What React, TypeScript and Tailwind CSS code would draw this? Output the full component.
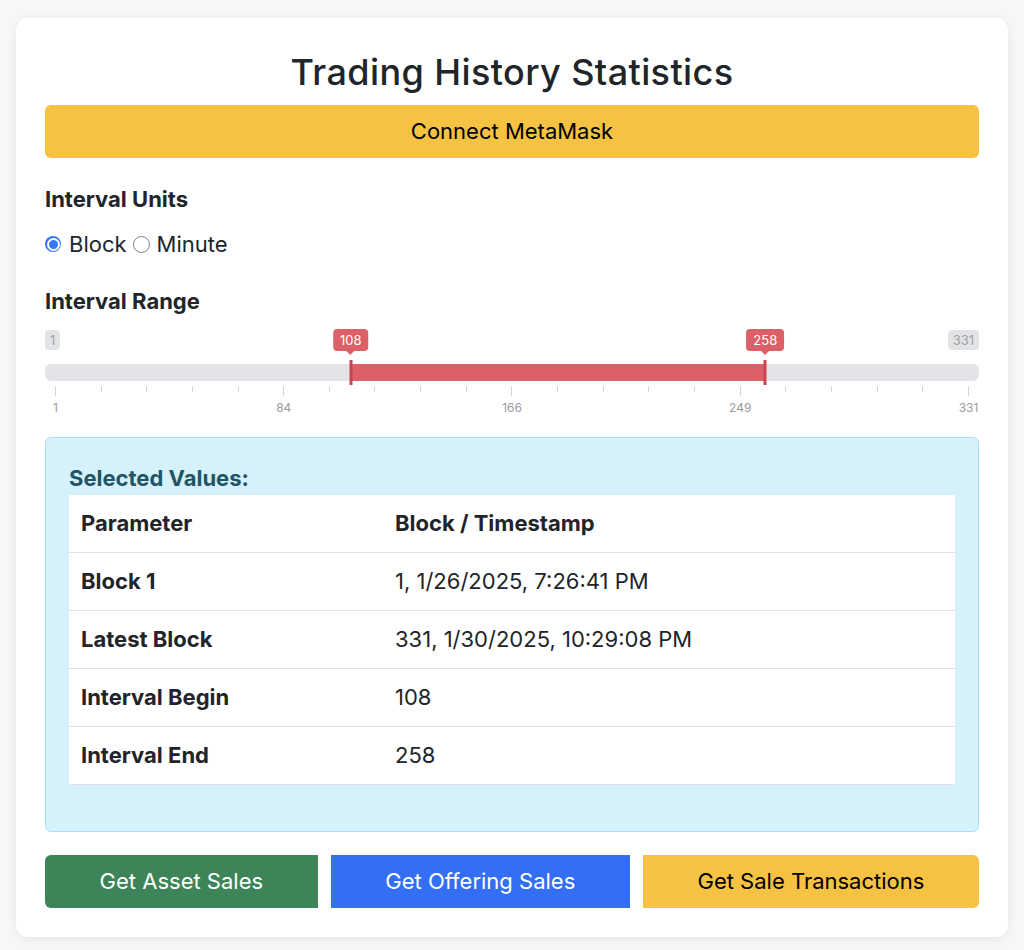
import React from 'react';

const MIN = 1;
const MAX = 331;
const BEGIN = 108;
const END = 258;

// ticks run from 10px to 922px along the 935px track
const toX = (v: number) => 10 + ((v - MIN) / (MAX - MIN)) * 912;

const ticks = Array.from({ length: 21 }, (_, i) => i);
const labels = [1, 84, 166, 249, 331];

const rows = [
  { name: 'Block 1', value: '1, 1/26/2025, 7:26:41 PM' },
  { name: 'Latest Block', value: '331, 1/30/2025, 10:29:08 PM' },
  { name: 'Interval Begin', value: '108' },
  { name: 'Interval End', value: '258' },
];

const Tooltip: React.FC<{ value: number }> = ({ value }) => (
  <div
    className="absolute top-[1px] -translate-x-1/2 flex flex-col items-center"
    style={{ left: toX(value) }}
  >
    <div className="h-[22px] px-[7px] rounded-[4px] bg-[#dc6068] text-white text-[13px] leading-[22px]">
      {value}
    </div>
    <div className="w-0 h-0 border-x-[4px] border-x-transparent border-t-[4px] border-t-[#dc6068]" />
  </div>
);

const Handle: React.FC<{ value: number }> = ({ value }) => (
  <div
    className="absolute -top-[4px] h-[25px] w-[3px] -translate-x-1/2 bg-[#c9444e]"
    style={{ left: toX(value) }}
  />
);

const RangeSlider = () => {
  const left = toX(BEGIN);
  const right = toX(END);
  return (
    <div className="mt-[12px]">
      <div className="relative flex justify-between items-start h-[24px] pt-[2px] text-[13px] leading-[20px] text-[#a0a0a0]">
        <span className="px-[5px] rounded-[4px] bg-[#e3e4e7]">1</span>
        <span className="px-[5px] rounded-[4px] bg-[#e3e4e7]">331</span>
        <Tooltip value={BEGIN} />
        <Tooltip value={END} />
      </div>
      <div className="relative mt-[12px] h-[17px] rounded-[6px] bg-[#e3e4e7]">
        <div className="absolute inset-y-0 bg-[#dc6068]" style={{ left, width: right - left }} />
        <Handle value={BEGIN} />
        <Handle value={END} />
      </div>
      <div className="mt-[5px] h-[10px] px-[10px] flex justify-between items-start">
        {ticks.map((i) => (
          <div key={i} className={i % 5 === 0 ? 'h-[10px] w-px bg-[#d4d4d4]' : 'h-[6px] w-px bg-[#d4d4d4]'} />
        ))}
      </div>
      <div className="mt-[4px] px-[10px] flex justify-between text-[12px] leading-[16px] text-[#9b9b9b]">
        {labels.map((v) => (
          <div key={v} className="w-px flex justify-center">
            <span>{v}</span>
          </div>
        ))}
      </div>
    </div>
  );
};

const App = () => {
  return (
    <div className="min-h-[950px] bg-[#f6f7f9] pt-[18px] px-[16px] font-['Inter','Liberation_Sans',sans-serif] text-[#212529]">
      <div className="w-[992px] h-[919px] rounded-[12px] bg-white shadow-[0_2px_10px_rgba(0,0,0,0.08)] px-[29px] pt-[30px]">
        <h1 className="text-center text-[36px] leading-[48px] font-medium tracking-[0.4px]">
          Trading History Statistics
        </h1>
        <button className="mt-[9px] w-full h-[53px] rounded-[6px] bg-[#f6c244] text-black text-[22px]">
          Connect MetaMask
        </button>

        <div className="mt-[26px] text-[22px] leading-[30px] font-bold">Interval Units</div>
        <div className="mt-[15px] flex items-center h-[30px] text-[22px]">
          <span className="w-[16px] h-[16px] rounded-full bg-[#3478f6] flex items-center justify-center">
            <span className="w-[13px] h-[13px] rounded-full border-[2px] border-white bg-[#3478f6]" />
          </span>
          <span className="ml-[8px]">Block</span>
          <span className="ml-[6px] w-[17px] h-[17px] rounded-full border border-[#808080] bg-white" />
          <span className="ml-[7px]">Minute</span>
        </div>

        <div className="mt-[27px] text-[22px] leading-[30px] font-bold">Interval Range</div>
        <RangeSlider />

        <div className="mt-[21px] h-[395px] rounded-[6px] border border-[#a8e2f2] bg-[#d5f1f9] px-[23px] pt-[25px]">
          <div className="text-[22px] leading-[30px] font-bold text-[#1f5566]">Selected Values:</div>
          <table className="mt-[2px] w-full table-fixed bg-white text-[22px] border-collapse">
            <colgroup>
              <col className="w-[314px]" />
              <col />
            </colgroup>
            <thead>
              <tr className="h-[57px] border-b border-[#dee2e6]">
                <th className="px-[12px] text-left font-bold">Parameter</th>
                <th className="px-[12px] text-left font-bold">Block / Timestamp</th>
              </tr>
            </thead>
            <tbody>
              {rows.map((row) => (
                <tr key={row.name} className="h-[58px] border-b border-[#dee2e6]">
                  <td className="px-[12px] font-bold">{row.name}</td>
                  <td className="px-[12px]">{row.value}</td>
                </tr>
              ))}
            </tbody>
          </table>
        </div>

        <div className="mt-[23px] flex gap-[13px] h-[53px] text-[22px]">
          <button className="flex-grow rounded-l-[6px] bg-[#3d8458] text-white">Get Asset Sales</button>
          <button className="flex-grow bg-[#346ef3] text-white">Get Offering Sales</button>
          <button className="flex-grow rounded-r-[6px] bg-[#f6c244] text-black">Get Sale Transactions</button>
        </div>
      </div>
    </div>
  );
};

export default App;
